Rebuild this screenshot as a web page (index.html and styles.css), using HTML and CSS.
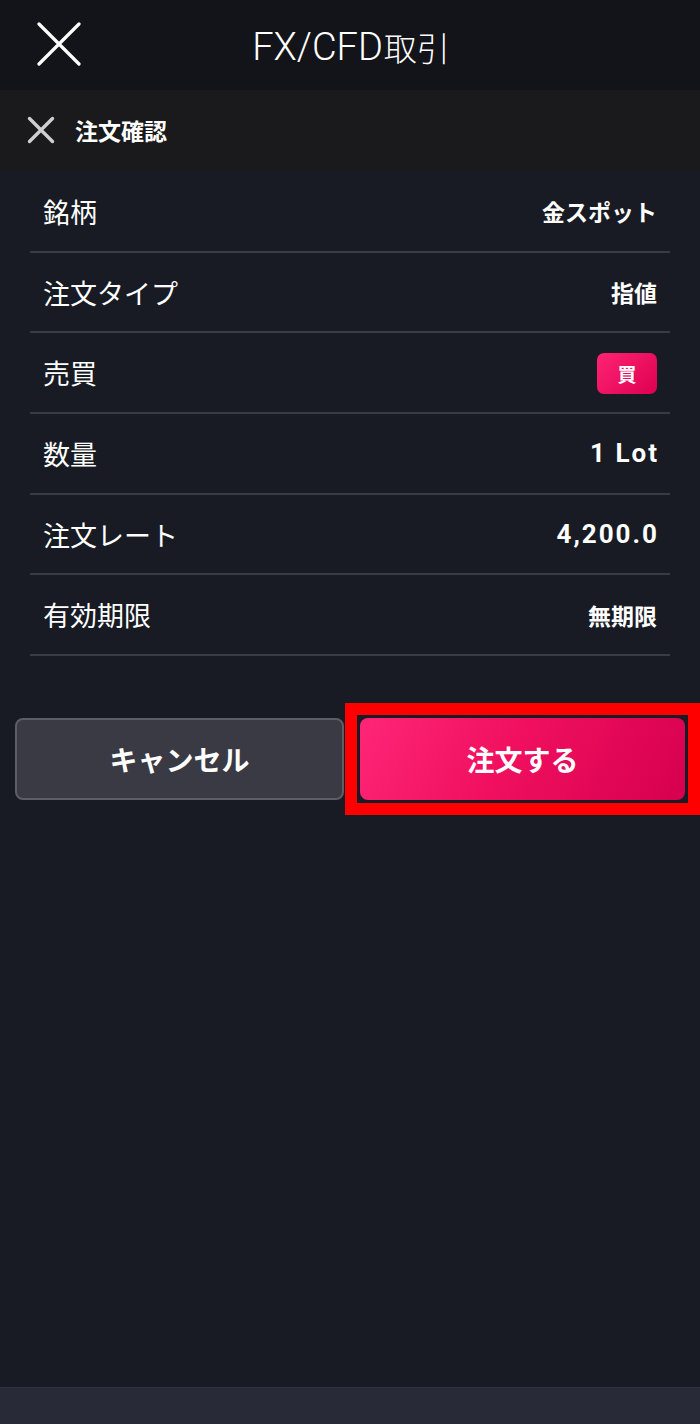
FILE: index.html
```html
<!DOCTYPE html>
<html lang="ja">
<head>
<meta charset="utf-8">
<title>FX/CFD取引</title>
<link rel="stylesheet" href="styles.css">
</head>
<body>
<div class="page">
  <header class="topbar">
    <div class="topbar-left">
      <svg class="close-big" viewBox="0 0 44 44" width="44" height="44" aria-hidden="true">
        <path d="M2 2 L42 42 M42 2 L2 42" stroke="#ffffff" stroke-width="3.2" stroke-linecap="round" fill="none"/>
      </svg>
    </div>
    <h1 class="title">FX/CFD<span class="title-cjk">取引</span></h1>
    <div class="topbar-right"></div>
  </header>

  <div class="subbar">
    <svg class="close-small" viewBox="0 0 28 28" width="28" height="28" aria-hidden="true">
      <path d="M2.5 2.5 L25.5 25.5 M25.5 2.5 L2.5 25.5" stroke="#cfcfd1" stroke-width="3.4" stroke-linecap="round" fill="none"/>
    </svg>
    <span class="subbar-title">注文確認</span>
  </div>

  <main class="content">
    <ul class="rows">
      <li class="row"><span class="label">銘柄</span><span class="value">金スポット</span></li>
      <li class="row"><span class="label">注文タイプ</span><span class="value">指値</span></li>
      <li class="row"><span class="label">売買</span><span class="badge">買</span></li>
      <li class="row"><span class="label">数量</span><span class="value latin">1 Lot</span></li>
      <li class="row"><span class="label">注文レート</span><span class="value latin">4,200.0</span></li>
      <li class="row"><span class="label">有効期限</span><span class="value">無期限</span></li>
    </ul>

    <div class="actions">
      <button class="btn btn-cancel" type="button">キャンセル</button>
      <div class="highlight">
        <button class="btn btn-order" type="button">注文する</button>
      </div>
    </div>
  </main>

  <footer class="bottombar"></footer>
</div>
</body>
</html>
```

FILE: styles.css
```css
* {
  box-sizing: border-box;
}

html, body {
  margin: 0;
  padding: 0;
  background: #181b23;
}

body {
  font-family: "Noto Sans CJK JP", "Noto Sans", "Liberation Sans", sans-serif;
  color: #ffffff;
}

.page {
  display: flex;
  flex-direction: column;
  width: 700px;
  height: 1424px;
  overflow: hidden;
}

/* top bar */
.topbar {
  display: grid;
  grid-template-columns: 1fr auto 1fr;
  align-items: center;
  height: 90px;
  background: #131419;
}

.topbar-left {
  display: flex;
  align-items: center;
  padding-left: 37px;
  padding-bottom: 2px;
}

.close-big {
  display: block;
}

.title {
  display: flex;
  align-items: center;
  margin: 0;
  padding-top: 4px;
  padding-left: 2px;
  font-family: "Roboto", "Liberation Sans", sans-serif;
  font-size: 38px;
  font-weight: 300;
  line-height: 1;
  color: #ffffff;
}

.title-cjk {
  margin-left: 1px;
  font-family: "Noto Sans CJK JP", sans-serif;
  font-size: 33px;
  font-weight: 300;
}

/* sub bar */
.subbar {
  display: flex;
  align-items: center;
  gap: 20px;
  height: 82px;
  padding-left: 27px;
  padding-bottom: 2px;
  background: #1a1a1c;
}

.close-small {
  display: block;
}

.subbar-title {
  font-size: 23px;
  font-weight: 700;
  color: #ffffff;
}

/* content */
.content {
  flex: 1;
  background: #181b23;
}

.rows {
  list-style: none;
  margin: 0;
  padding: 0 30px;
}

.row {
  display: flex;
  align-items: center;
  justify-content: space-between;
  height: 80.7px;
  padding: 0 13px;
  border-bottom: 2px solid #3a3c45;
}

.label {
  font-size: 27px;
  font-weight: 400;
  color: #ffffff;
}

.value {
  font-size: 23px;
  font-weight: 700;
  color: #ffffff;
}

.value.latin {
  font-family: "Roboto", "Noto Sans", "Liberation Sans", sans-serif;
  font-size: 26px;
  letter-spacing: 2px;
  margin-right: -2px;
}

.badge {
  display: flex;
  align-items: center;
  justify-content: center;
  width: 60px;
  height: 41px;
  margin-top: 2px;
  border-radius: 7px;
  background: linear-gradient(135deg, #ff2472 0%, #dd0052 100%);
  font-size: 19px;
  font-weight: 700;
  color: #ffffff;
}

/* actions */
.actions {
  display: flex;
  align-items: center;
  gap: 1px;
  margin-top: 47px;
  padding-left: 15px;
}

.btn {
  display: flex;
  align-items: center;
  justify-content: center;
  height: 82px;
  margin: 0;
  border-radius: 8px;
  font-family: "Noto Sans CJK JP", "Noto Sans", sans-serif;
  font-size: 28px;
  font-weight: 700;
  color: #ffffff;
  cursor: pointer;
}

.btn-cancel {
  width: 329px;
  background: #3a3a45;
  border: 2px solid #5c5d65;
}

.highlight {
  flex: 1;
  border: 12px solid #ff0000;
  padding: 3px;
  background: #181b23;
}

.btn-order {
  width: 100%;
  border: none;
  background: linear-gradient(120deg, #ff2677 0%, #f0105f 45%, #d6004f 100%);
}

/* bottom bar */
.bottombar {
  height: 37px;
  background: #282a37;
  border-top: 1px solid #30323e;
}
```
